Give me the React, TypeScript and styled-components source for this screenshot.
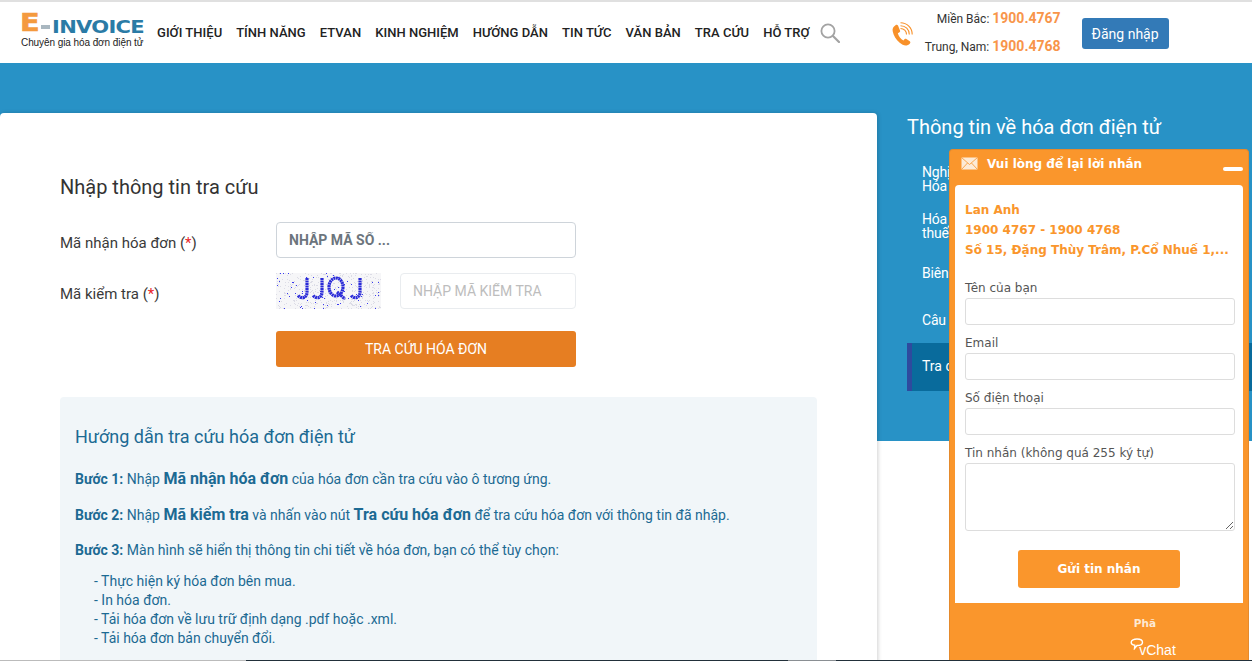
import React from "react";
import styled, { createGlobalStyle } from "styled-components";

const GlobalStyle = createGlobalStyle`
  html, body {
    margin: 0;
    padding: 0;
    height: 100%;
    overflow: hidden;
    background: #fff;
    font-family: Roboto, "Liberation Sans", sans-serif;
  }
  * { box-sizing: border-box; }
`;

const menu = ["GIỚI THIỆU", "TÍNH NĂNG", "ETVAN", "KINH NGHIỆM", "HƯỚNG DẪN", "TIN TỨC", "VĂN BẢN", "TRA CỨU", "HỖ TRỢ"];

const sideLinks = ["Nghị định\nHóa đơn", "Hóa đơn\nthuế", "Biên bản", "Câu hỏi"];

// captcha noise, fixed so the picture is the same on every load
const hash = (n: number) => {
  const v = Math.sin(n * 12.9898) * 43758.5453;
  return v - Math.floor(v);
};
const noise = Array.from({ length: 520 }, (_, i) => ({
  x: Math.floor(hash(i + 1) * 105),
  y: Math.floor(hash(i + 1000) * 36),
  blue: hash(i + 2000) < 0.14,
}));

const App: React.FC = () => {
  return (
    <Page>
      <GlobalStyle />
      <Header>
        <Logo>
          <LogoMark>
            <LogoE>E</LogoE>
            <LogoDash />
            <LogoWord>INVOICE</LogoWord>
          </LogoMark>
          <LogoSlogan>Chuyên gia hóa đơn điện tử</LogoSlogan>
        </Logo>
        <Nav>
          {menu.map((item) => (
            <NavItem key={item}>{item}</NavItem>
          ))}
        </Nav>
        <SearchIcon width="20" height="20" viewBox="0 0 20 20">
          <circle cx="8" cy="8" r="6.6" fill="none" stroke="#a3a3a3" strokeWidth="1.8" />
          <path d="M13 13l6 6" stroke="#a3a3a3" strokeWidth="2.2" strokeLinecap="round" />
        </SearchIcon>
        <PhoneIcon width="24" height="26" viewBox="0 0 24 26">
          <path
            d="M4.5 4.2c-2.3 1.4-3.3 3.4-2.8 6 .9 4.3 3.3 8.4 7 11.6 2.2 1.9 4.7 3 7 2.6 1.7-.3 3-1.2 3.6-2.6.2-.6 0-1.1-.5-1.500l-3.400-2.400c-.6-.4-1.200-.3-1.700.2l-1.300 1.400c-2.600-1.400-4.700-4.200-5.600-7.300l1.700-.9c.6-.4.8-1 .6-1.600L7 4.600c-.3-.8-1.700-1-2.500-.4z"
            fill="#f8912a"
          />
          <g fill="none" stroke="#f8912a" strokeWidth="1.1">
            <path d="M9.500 7.500c3.400 0 6 2.600 6 6" />
            <path d="M9.500 4.700c5 0 8.800 3.800 8.800 8.800" />
            <path d="M9.500 1.800c6.600 0 11.700 5.100 11.700 11.700" />
          </g>
        </PhoneIcon>
        <Hotline>
          <HotlineRow>
            Miền Bắc: <HotlineNumber>1900.4767</HotlineNumber>
          </HotlineRow>
          <HotlineRow>
            Trung, Nam: <HotlineNumber>1900.4768</HotlineNumber>
          </HotlineRow>
        </Hotline>
        <LoginButton>Đăng nhập</LoginButton>
      </Header>

      <Band>
        <MainCard>
          <FormTitle>Nhập thông tin tra cứu</FormTitle>
          <FormRow>
            <FormLabel>
              Mã nhận hóa đơn (<Required>*</Required>)
            </FormLabel>
            <CodeInput placeholder="NHẬP MÃ SỐ ..." />
          </FormRow>
          <FormRow>
            <FormLabel>
              Mã kiểm tra (<Required>*</Required>)
            </FormLabel>
            <Captcha>
              <svg width="105" height="36" viewBox="0 0 105 36">
                {noise.map((d, i) => (
                  <rect key={i} x={d.x} y={d.y} width="1" height="1" fill={d.blue ? "#3a3af0" : "#dcdce6"} />
                ))}
                <g fill="none" stroke="#2b2bd8" strokeWidth="3.2" strokeDasharray="2 0.5">
                  <path d="M31 5v14c0 7-7 7-9 3" />
                  <path d="M46 5v14c0 7-7 7-9 3" />
                  <ellipse cx="60" cy="14" rx="7" ry="9" />
                  <path d="M61 19l8 7" />
                  <path d="M84 5v14c0 7-7 7-9 3" />
                </g>
              </svg>
            </Captcha>
            <CaptchaInput placeholder="NHẬP MÃ KIỂM TRA" />
          </FormRow>
          <SubmitRow>
            <SubmitButton>TRA CỨU HÓA ĐƠN</SubmitButton>
          </SubmitRow>
          <GuideBox>
            <GuideTitle>Hướng dẫn tra cứu hóa đơn điện tử</GuideTitle>
            <GuideStep>
              <StepLabel>Bước 1:</StepLabel> Nhập <Strong>Mã nhận hóa đơn</Strong> của hóa đơn cần tra cứu vào ô tương ứng.
            </GuideStep>
            <GuideStep>
              <StepLabel>Bước 2:</StepLabel> Nhập <Strong>Mã kiểm tra</Strong> và nhấn vào nút{" "}
              <Strong>Tra cứu hóa đơn</Strong> để tra cứu hóa đơn với thông tin đã nhập.
            </GuideStep>
            <GuideStep>
              <StepLabel>Bước 3:</StepLabel> Màn hình sẽ hiển thị thông tin chi tiết về hóa đơn, bạn có thể tùy chọn:
            </GuideStep>
            <GuideList>
              <li>- Thực hiện ký hóa đơn bên mua.</li>
              <li>- In hóa đơn.</li>
              <li>- Tải hóa đơn về lưu trữ định dạng .pdf hoặc .xml.</li>
              <li>- Tải hóa đơn bản chuyển đổi.</li>
            </GuideList>
          </GuideBox>
        </MainCard>

        <Sidebar>
          <SideTitle>Thông tin về hóa đơn điện tử</SideTitle>
          {sideLinks.map((text) => (
            <SideLink key={text}>{text}</SideLink>
          ))}
          <SideActive>Tra cứu hóa đơn</SideActive>
        </Sidebar>
      </Band>

      <ChatWidget>
        <ChatHeader>
          <svg width="17" height="13" viewBox="0 0 17 13">
            <rect x="0.5" y="0.5" width="16" height="12" fill="#fdebd6" />
            <path d="M0.500 0.500l8 7 8-7M0.500 12.500l6-6.500M16.500 12.500l-6-6.500" fill="none" stroke="#f9952c" strokeWidth="0.8" />
          </svg>
          <ChatTitle>Vui lòng để lại lời nhắn</ChatTitle>
          <ChatMinimize />
        </ChatHeader>
        <ChatBody>
          <ChatContact>
            Lan Anh
            <br />
            1900 4767 - 1900 4768
            <br />
            Số 15, Đặng Thùy Trâm, P.Cổ Nhuế 1,...
          </ChatContact>
          <ChatLabel $first>Tên của bạn</ChatLabel>
          <ChatInput />
          <ChatLabel>Email</ChatLabel>
          <ChatInput />
          <ChatLabel>Số điện thoại</ChatLabel>
          <ChatInput />
          <ChatLabel>Tin nhắn (không quá 255 ký tự)</ChatLabel>
          <ChatTextarea />
          <ChatSend>Gửi tin nhắn</ChatSend>
        </ChatBody>
        <ChatFooter>
          <FooterText>Phã</FooterText>
          <VChat>
            <svg width="14" height="12" viewBox="0 0 14 12">
              <path d="M7 1c3 0 5.500 1.200 5.500 3.200S10 7.500 7 7.500L4.500 10.500l.3-3.200C2.800 7 1.200 5.800 1.200 4.200 1.200 2.200 4 1 7 1z" fill="none" stroke="#fff" strokeWidth="1.4" />
            </svg>
            <VChatWord>vChat</VChatWord>
          </VChat>
        </ChatFooter>
      </ChatWidget>
      <BottomBar />
    </Page>
  );
};

export default App;

const Page = styled.div`
  position: relative;
  width: 1252px;
  height: 661px;
  overflow: hidden;
  background: #fff;
`;

const Header = styled.header`
  height: 63px;
  border-top: 2px solid #e0e0e0;
  background: #fff;
  display: flex;
  align-items: center;
`;

const Logo = styled.div`
  width: 157px;
  flex: none;
  padding-left: 20px;
  display: flex;
  flex-direction: column;
  margin-top: -1px;
`;

const LogoMark = styled.div`
  display: flex;
  align-items: center;
  height: 21px;
`;

const LogoE = styled.span`
  font-family: "DejaVu Sans", sans-serif;
  font-weight: 700;
  font-size: 24px;
  line-height: 21px;
  height: 21px;
  width: 21px;
  color: #f49a3e;
  -webkit-text-stroke: 0.6px #f49a3e;
  transform: translateY(-3px) scaleX(1.2);
  transform-origin: left;
`;

const LogoDash = styled.span`
  width: 9px;
  height: 4px;
  background: #a9b7c0;
  margin: 2px 2px 0 0;
`;

const LogoWord = styled.span`
  font-family: "DejaVu Sans", sans-serif;
  font-weight: 700;
  font-size: 18px;
  line-height: 21px;
  color: #2a7ba6;
  letter-spacing: -0.6px;
  transform: scaleX(1.17);
  transform-origin: left;
`;

const LogoSlogan = styled.span`
  font-family: "Liberation Sans", sans-serif;
  font-size: 10px;
  line-height: 12px;
  letter-spacing: -0.08px;
  color: #222;
  margin: 0 0 0 1px;
  white-space: nowrap;
`;

const Nav = styled.nav`
  display: flex;
  gap: 14px;
  align-items: center;
`;

const NavItem = styled.a`
  font-size: 13px;
  font-weight: 500;
  color: #222;
  white-space: nowrap;
  letter-spacing: 0.03px;
`;

const SearchIcon = styled.svg`
  margin-left: 10px;
  flex: none;
`;

const PhoneIcon = styled.svg`
  margin-left: 51px;
  margin-top: 3px;
  flex: none;
`;

const Hotline = styled.div`
  width: 146px;
  display: flex;
  flex-direction: column;
  align-items: flex-end;
  gap: 7px;
`;

const HotlineRow = styled.div`
  font-size: 12px;
  line-height: 20px;
  color: #333;
  white-space: nowrap;
`;

const HotlineNumber = styled.span`
  font-size: 14px;
  font-weight: 700;
  color: #f8954a;
`;

const LoginButton = styled.button`
  margin-left: 21px;
  margin-top: 2px;
  width: 87px;
  height: 31px;
  border: none;
  border-radius: 3px;
  background: #337ab7;
  color: #fff;
  font-family: inherit;
  font-size: 14px;
  padding: 0;
`;

const Band = styled.div`
  height: 378px;
  background: #2892c6;
  padding-top: 50px;
  display: flex;
  align-items: flex-start;
`;

const MainCard = styled.main`
  width: 877px;
  height: 600px;
  flex: none;
  background: #fff;
  border-radius: 4px 4px 0 0;
  box-shadow: 1px 0 4px rgba(0, 0, 0, 0.18);
  padding: 61px 60px 0;
`;

const FormTitle = styled.h2`
  margin: 0 0 22px;
  font-size: 20px;
  font-weight: 400;
  line-height: 26px;
  color: #333;
`;

const FormRow = styled.div`
  display: flex;
  align-items: center;
  height: 36px;
  margin-bottom: 15px;
`;

const FormLabel = styled.label`
  width: 216px;
  flex: none;
  padding-top: 5px;
  font-size: 15px;
  color: #3a3a3a;
`;

const Required = styled.span`
  color: #e8262a;
`;

const CodeInput = styled.input`
  width: 300px;
  height: 36px;
  border: 1px solid #ced4da;
  border-radius: 4px;
  padding: 0 12px;
  font-family: inherit;
  font-size: 14px;
  &::placeholder {
    color: #6c757d;
    font-weight: 700;
    opacity: 1;
  }
`;

const Captcha = styled.div`
  width: 105px;
  height: 36px;
  flex: none;
  background: #f6f6f8;
  line-height: 0;
`;

const CaptchaInput = styled.input`
  width: 176px;
  height: 36px;
  margin-left: 19px;
  border: 1px solid #e9ecef;
  border-radius: 4px;
  padding: 0 12px;
  font-family: inherit;
  font-size: 14px;
  &::placeholder {
    color: #bdbdbd;
    opacity: 1;
  }
`;

const SubmitRow = styled.div`
  padding: 7px 0 0 216px;
`;

const SubmitButton = styled.button`
  display: block;
  width: 300px;
  height: 36px;
  border: none;
  border-radius: 3px;
  background: #e67e22;
  color: #fff;
  font-family: inherit;
  font-size: 14px;
  padding: 0;
`;

const GuideBox = styled.section`
  width: 757px;
  margin-top: 30px;
  height: 400px;
  background: #f1f6f9;
  border-radius: 4px;
  padding: 27px 15px 0;
  color: #1c6a93;
`;

const GuideTitle = styled.h3`
  margin: 0 0 18px;
  font-size: 18px;
  font-weight: 400;
  line-height: 26px;
  color: #1c6a93;
`;

const GuideStep = styled.p`
  margin: 0 0 14px;
  font-size: 14px;
  line-height: 21px;
`;

const StepLabel = styled.b`
  font-weight: 700;
`;

const Strong = styled.b`
  font-size: 16px;
  font-weight: 700;
`;

const GuideList = styled.ul`
  list-style: none;
  margin: -3px 0 0;
  padding: 0 0 0 19px;
  font-size: 14px;
  line-height: 19px;
`;

const Sidebar = styled.aside`
  flex: 1;
  padding-left: 30px;
  color: #fff;
`;

const SideTitle = styled.h2`
  margin: 0 0 14px;
  font-size: 20px;
  font-weight: 400;
  line-height: 28px;
`;

const SideLink = styled.div`
  height: 47px;
  padding-left: 15px;
  font-size: 14px;
  line-height: 14px;
  letter-spacing: -0.2px;
  white-space: pre-line;
  display: flex;
  align-items: center;
`;

const SideActive = styled.div`
  height: 48px;
  border-left: 5px solid #2e4a9e;
  background: #096b9c;
  padding-left: 10px;
  font-size: 14px;
  line-height: 46px;
  white-space: nowrap;
`;

const ChatWidget = styled.aside`
  position: absolute;
  left: 949px;
  top: 149px;
  width: 300px;
  height: 512px;
  background: #fa962c;
  border: 1px solid #e58a2c;
  border-bottom: none;
  border-radius: 4px 4px 0 0;
  display: flex;
  flex-direction: column;
  font-family: "DejaVu Sans", sans-serif;
`;

const ChatHeader = styled.div`
  height: 35px;
  flex: none;
  display: flex;
  align-items: center;
  padding: 0 4px 8px 11px;
`;

const ChatTitle = styled.span`
  margin-left: 9px;
  font-size: 12px;
  font-weight: 700;
  color: #fff;
  white-space: nowrap;
`;

const ChatMinimize = styled.span`
  width: 20px;
  height: 4px;
  margin-left: auto;
  margin-top: 10px;
  margin-right: 1px;
  background: #fff;
  border-radius: 2px;
`;

const ChatBody = styled.div`
  height: 418px;
  flex: none;
  margin: 0 5px;
  background: #fff;
  border-radius: 4px 4px 0 0;
  padding: 15px 8px 0 10px;
  display: flex;
  flex-direction: column;
`;

const ChatContact = styled.div`
  font-size: 12px;
  font-weight: 700;
  line-height: 20px;
  color: #fa962c;
  white-space: nowrap;
  margin-bottom: 19px;
`;

const ChatLabel = styled.label<{ $first?: boolean }>`
  font-size: 12px;
  line-height: 14px;
  color: #555;
  margin-top: ${(p) => (p.$first ? 2 : 11)}px;
  margin-bottom: 3px;
`;

const ChatInput = styled.input`
  height: 27px;
  flex: none;
  border: 1px solid #ddd;
  border-radius: 3px;
  background: #fff;
`;

const ChatTextarea = styled.textarea`
  height: 68px;
  flex: none;
  border: 1px solid #ddd;
  border-radius: 3px;
  background: #fff;
`;

const ChatSend = styled.button`
  width: 162px;
  height: 38px;
  flex: none;
  align-self: flex-start;
  margin-top: 19px;
  margin-left: 53px;
  border: none;
  border-radius: 3px;
  background: #fa962c;
  color: #fff;
  font-family: inherit;
  font-size: 12px;
  font-weight: 700;
  padding: 0;
`;

const ChatFooter = styled.div`
  flex: 1;
  display: flex;
  flex-direction: column;
  align-items: center;
  padding: 13px 0 0 92px;
  color: #fff;
`;

const FooterText = styled.span`
  font-size: 10.500px;
  font-weight: 700;
  line-height: 14px;
  color: #fde9d3;
`;

const VChat = styled.div`
  display: flex;
  align-items: flex-start;
  margin: 8px 0 0 16px;
  height: 20px;
`;

const VChatWord = styled.span`
  font-family: "Liberation Sans", sans-serif;
  font-size: 14px;
  line-height: 14px;
  margin: 5px 0 0 -5px;
`;

const BottomBar = styled.div`
  position: absolute;
  left: 0;
  right: 0;
  bottom: 0;
  height: 1px;
  background: linear-gradient(to right, #bbb 0 246px, #22303a 246px 788px, #8a8f93 788px 836px, #22303a 836px 1252px);
`;
